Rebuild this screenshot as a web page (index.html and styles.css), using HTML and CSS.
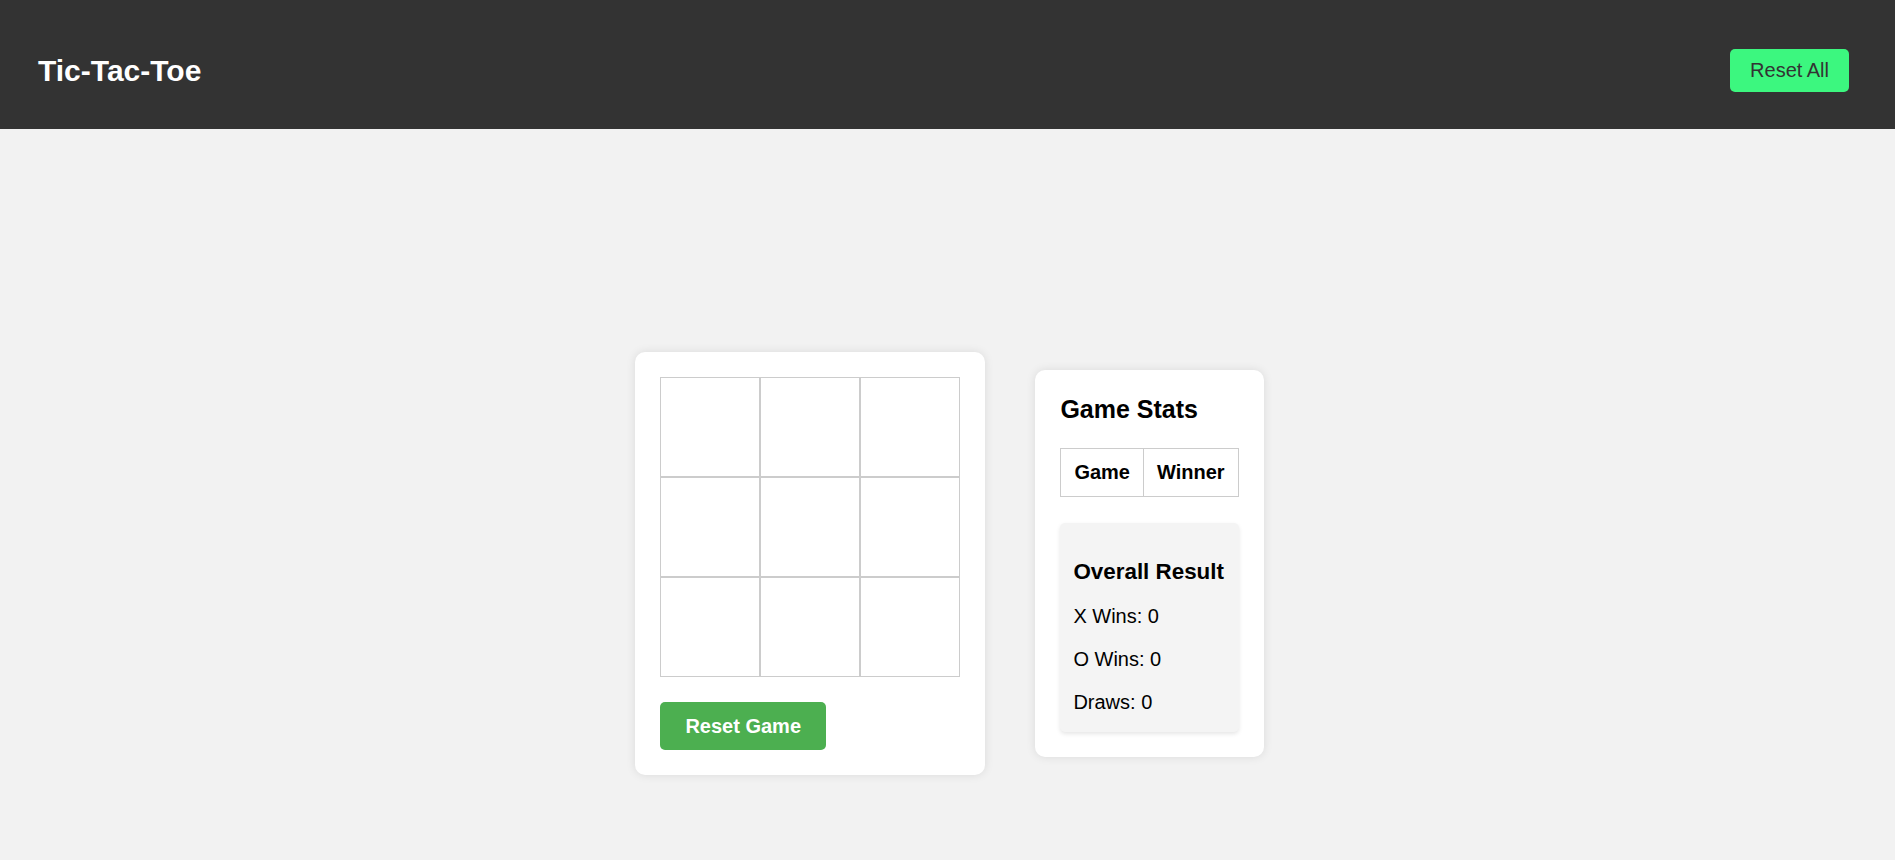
FILE: index.html
```html
<!DOCTYPE html>
<html lang="en">
<head>
<meta charset="UTF-8">
<title>Tic-Tac-Toe</title>
<link rel="stylesheet" href="styles.css">
</head>
<body>
<header class="topbar">
  <h1 class="title">Tic-Tac-Toe</h1>
  <button class="reset-all">Reset All</button>
</header>
<main class="main">
  <section class="board-card">
    <div class="board">
      <div class="cell"></div><div class="cell"></div><div class="cell"></div>
      <div class="cell"></div><div class="cell"></div><div class="cell"></div>
      <div class="cell"></div><div class="cell"></div><div class="cell"></div>
    </div>
    <button class="reset-game">Reset Game</button>
  </section>
  <section class="stats-card">
    <h2 class="stats-title">Game Stats</h2>
    <table class="stats-table">
      <thead>
        <tr><th>Game</th><th>Winner</th></tr>
      </thead>
      <tbody></tbody>
    </table>
    <div class="overall">
      <h3 class="overall-title">Overall Result</h3>
      <p class="overall-line">X Wins: 0</p>
      <p class="overall-line">O Wins: 0</p>
      <p class="overall-line">Draws: 0</p>
    </div>
  </section>
</main>
</body>
</html>
```

FILE: styles.css
```css
html, body {
  margin: 0;
  padding: 0;
}

body {
  background: #f2f2f2;
  font-family: "Liberation Sans", Arial, sans-serif;
  color: #000;
}

.topbar {
  height: 129px;
  box-sizing: border-box;
  background: #333333;
  display: flex;
  align-items: center;
  justify-content: space-between;
  padding: 12px 46px 0 38px;
}

.title {
  margin: 0;
  color: #ffffff;
  font-size: 30px;
  font-weight: bold;
}

.reset-all {
  background: #3cf77f;
  color: #333333;
  border: none;
  border-radius: 5px;
  font-family: "Liberation Sans", Arial, sans-serif;
  font-size: 20px;
  line-height: 23px;
  padding: 10px 20px;
}

.main {
  min-height: 100vh;
  box-sizing: border-box;
  padding: 9px 0 0 4px;
  display: flex;
  justify-content: center;
  align-items: center;
  gap: 50px;
}

.board-card,
.stats-card {
  background: #ffffff;
  border-radius: 10px;
  box-shadow: 0 0 10px rgba(0, 0, 0, 0.1);
  padding: 25px;
}

.board-card {
  display: flex;
  flex-direction: column;
  align-items: flex-start;
  gap: 25px;
}

.board {
  display: grid;
  grid-template-columns: repeat(3, 100px);
  grid-template-rows: repeat(3, 100px);
}

.cell {
  box-sizing: border-box;
  border: 1px solid #cccccc;
  background: #ffffff;
}

.reset-game {
  background: #4caf50;
  color: #ffffff;
  border: none;
  border-radius: 5px;
  font-family: "Liberation Sans", Arial, sans-serif;
  font-size: 20px;
  font-weight: bold;
  line-height: 24px;
  padding: 12px 25px;
}

.stats-card {
  display: flow-root;
}

.stats-title {
  margin: 0 0 24px;
  font-size: 25px;
  font-weight: bold;
  line-height: 29px;
}

.stats-table {
  border-collapse: collapse;
  width: 100%;
  margin-bottom: 26px;
}

.stats-table th {
  border: 1px solid #cccccc;
  padding: 12px 13px;
  font-size: 20px;
  font-weight: bold;
  line-height: 23px;
}

.overall {
  display: flow-root;
  background: #f4f4f4;
  border-radius: 5px;
  box-shadow: 0 2px 4px rgba(0, 0, 0, 0.1);
  padding: 16px 13px 0;
}

.overall-title {
  margin: 20px 0;
  font-size: 22.4px;
  font-weight: bold;
  line-height: 25.8px;
}

.overall-line {
  margin: 20px 0;
  font-size: 20px;
  line-height: 23px;
}

.overall-line:last-child {
  margin-bottom: 18px;
}
```
